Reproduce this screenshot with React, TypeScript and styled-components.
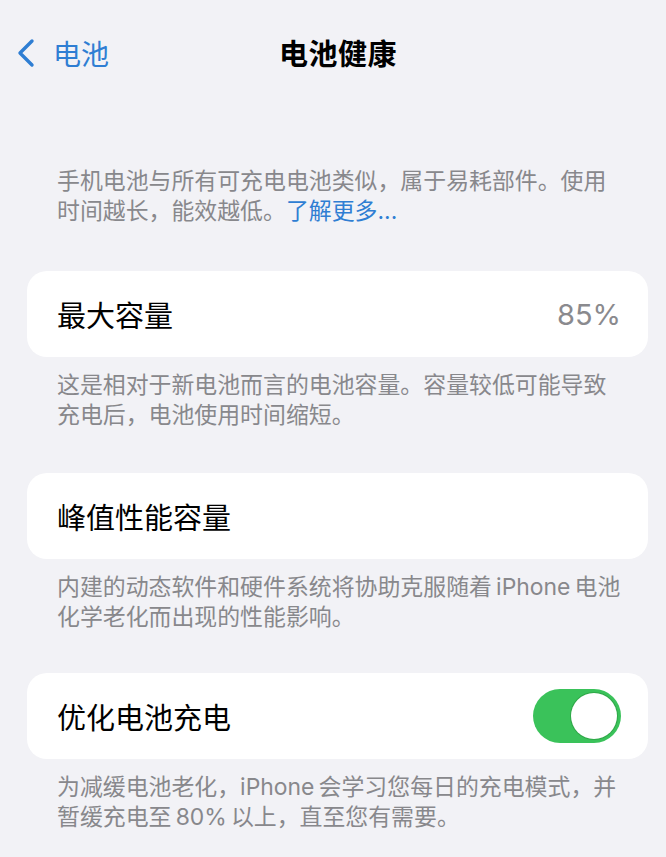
import styled, {createGlobalStyle} from "styled-components";

const GlobalStyle = createGlobalStyle`
  html, body {
    margin: 0;
    padding: 0;
    background: #f2f2f6;
  }
  body {
    font-family: Inter, "Noto Sans CJK SC", "Noto Sans", sans-serif;
    -webkit-font-smoothing: antialiased;
  }
`;

const Page = styled.div`
  width: 666px;
  min-height: 857px;
  background: #f2f2f6;
  overflow: hidden;
`;

const NavBar = styled.header`
  display: grid;
  grid-template-columns: 1fr auto 1fr;
  align-items: center;
  height: 104px;
  padding: 0 5px 0 15px;
`;

const BackButton = styled.div`
  display: flex;
  align-items: center;
  gap: 16px;
  color: #2f7ed3;
  font-size: 28px;
  margin-top: 2px;
`;

const NavTitle = styled.h1`
  margin: 0;
  font-size: 29px;
  font-weight: 700;
  color: #000;
  letter-spacing: 0.5px;
`;

const Content = styled.main`
  margin: 0 18px 0 27px;
`;

const Note = styled.p<{$top?: number; $bottom?: number}>`
  margin: 0;
  padding: ${(p) => p.$top ?? 13}px 20px ${(p) => p.$bottom ?? 43}px 30px;
  font-size: 22.9px;
  line-height: 30px;
  color: #88888c;
  white-space: nowrap;
`;

const Link = styled.span`
  color: #2f7ed3;
`;

const Card = styled.div`
  display: flex;
  align-items: center;
  justify-content: space-between;
  height: 86px;
  padding: 0 27px 0 30px;
  background: #fff;
  border-radius: 20px;
`;

const Label = styled.span`
  font-size: 29px;
  color: #000;
`;

const Value = styled.span`
  font-size: 29px;
  color: #8a8a8e;
`;

const Toggle = styled.div<{$on: boolean}>`
  display: flex;
  justify-content: ${(p) => (p.$on ? "flex-end" : "flex-start")};
  align-items: center;
  width: 88px;
  height: 54px;
  padding: 4px;
  box-sizing: border-box;
  border-radius: 27px;
  background: ${(p) => (p.$on ? "#3ac25a" : "#e9e9eb")};
`;

const Knob = styled.div`
  width: 46px;
  height: 46px;
  border-radius: 50%;
  background: #fff;
  box-shadow: 0 0 0 1px rgba(40, 150, 60, 0.6);
`;

const Chevron = () => (
  <svg width="22" height="30" viewBox="0 0 22 30">
    <polyline
      points="17,3 5,15 17,27"
      fill="none"
      stroke="#2f7ed3"
      strokeWidth="3.4"
      strokeLinecap="round"
      strokeLinejoin="round"
    />
  </svg>
);

export default function App() {
  return (
    <Page>
      <GlobalStyle />
      <NavBar>
        <BackButton>
          <Chevron />
          <span>电池</span>
        </BackButton>
        <NavTitle>电池健康</NavTitle>
        <div />
      </NavBar>
      <Content>
        <Note $top={62} $bottom={45}>
          手机电池与所有可充电电池类似，属于易耗部件。使用
          <br />
          时间越长，能效越低。<Link>了解更多...</Link>
        </Note>

        <Card>
          <Label>最大容量</Label>
          <Value>85%</Value>
        </Card>
        <Note>
          这是相对于新电池而言的电池容量。容量较低可能导致
          <br />
          充电后，电池使用时间缩短。
        </Note>

        <Card>
          <Label>峰值性能容量</Label>
        </Card>
        <Note $bottom={41}>
          内建的动态软件和硬件系统将协助克服随着{"\u2009"}iPhone{"\u2009"}电池
          <br />
          化学老化而出现的性能影响。
        </Note>

        <Card>
          <Label>优化电池充电</Label>
          <Toggle $on>
            <Knob />
          </Toggle>
        </Card>
        <Note>
          为减缓电池老化，iPhone{"\u2009"}会学习您每日的充电模式，并
          <br />
          暂缓充电至{"\u2009"}80%{"\u2009"}以上，直至您有需要。
        </Note>
      </Content>
    </Page>
  );
}
